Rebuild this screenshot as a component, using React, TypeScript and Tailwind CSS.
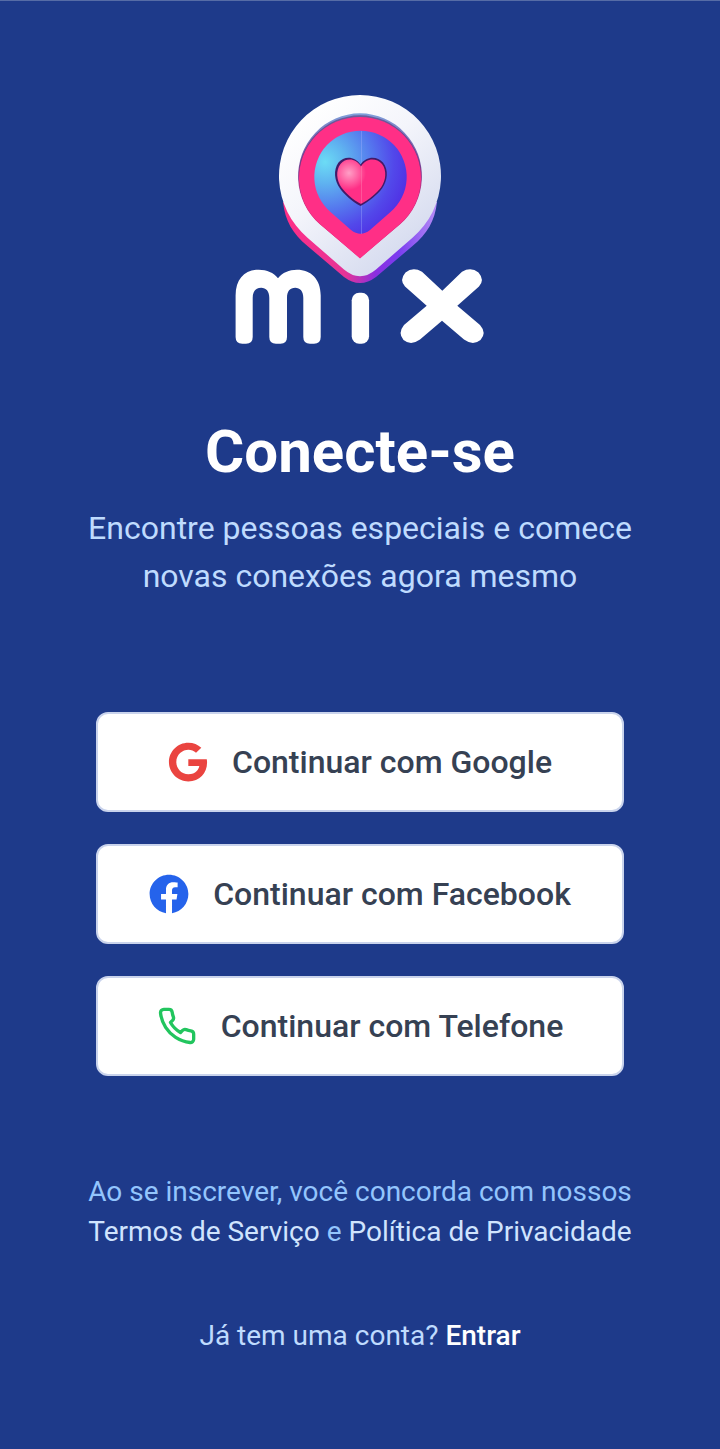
import type { ReactNode } from "react";
import { FaFacebook, FaGoogle } from "react-icons/fa";
import { FiPhone } from "react-icons/fi";

function MixLogo() {
  return (
    <svg viewBox="230 90 260 260" className="h-[260px] w-[260px]" role="img" aria-label="mix">
      <defs>
        <linearGradient id="rim" gradientUnits="userSpaceOnUse" x1="310" y1="110" x2="425" y2="250">
          <stop offset="0" stopColor="#ffffff" />
          <stop offset="0.4" stopColor="#f4f5fb" />
          <stop offset="1" stopColor="#d3d9ee" />
        </linearGradient>
        <linearGradient id="base" gradientUnits="userSpaceOnUse" x1="284" y1="0" x2="437" y2="0">
          <stop offset="0" stopColor="#ff2f86" />
          <stop offset="0.4" stopColor="#e53497" />
          <stop offset="0.6" stopColor="#8a2fe0" />
          <stop offset="0.75" stopColor="#7a3df0" />
          <stop offset="1" stopColor="#b58cf5" />
        </linearGradient>
        <radialGradient id="core" gradientUnits="userSpaceOnUse" cx="325" cy="162" r="86">
          <stop offset="0" stopColor="#6cdcf5" />
          <stop offset="0.25" stopColor="#5fb2f0" />
          <stop offset="0.55" stopColor="#5578ee" />
          <stop offset="0.8" stopColor="#5248ea" />
          <stop offset="1" stopColor="#5030e4" />
        </radialGradient>
        <radialGradient id="shine" gradientUnits="userSpaceOnUse" cx="349" cy="173" r="17">
          <stop offset="0" stopColor="#ff9fc6" />
          <stop offset="1" stopColor="#ff2f86" />
        </radialGradient>
        <linearGradient id="edge" gradientUnits="userSpaceOnUse" x1="0" y1="112" x2="0" y2="215">
          <stop offset="0" stopColor="#7fa2dc" />
          <stop offset="0.5" stopColor="#7a4a9c" />
          <stop offset="1" stopColor="#f0428f" />
        </linearGradient>
      </defs>
      <path
        fill="url(#base)"
        d="M283 202C285 221 293 234 307.500 246L344 277Q360 289 376 277L412.500 246C427 234 435 221 437 202Z"
      />
      <path
        fill="url(#rim)"
        d="M307.500 237.700A81 81 0 1 1 412.500 237.700L376 269.500Q360 283 344 269.500Z"
      />
      <path fill="url(#edge)" d="M319.500 224A61.900 63 0 1 1 400.500 224L360 258Z" />
      <path fill="#561f63" d="M320 224A61.300 61.800 0 1 1 400 224L360 258Z" fillOpacity="0.5" />
      <path fill="#ff2f86" d="M320 224A61 61 0 1 1 400 224L360 258.500Z" />
      <path
        fill="url(#core)"
        d="M330.500 212A46.200 46.200 0 1 1 390.500 212L370 230Q360.500 237.500 351 230Z"
      />
      <path stroke="#a8b4ff" strokeOpacity="0.35" strokeWidth="1" d="M361.500 131V234" />
      <path
        fill="#421a68"
        d="M360.500 164.500C355 156 344 155.500 338.500 162.500C333 170 334.500 181 340 188.500C344 194 352 201.500 360.500 206C369 201.500 378 194 382 188.500C387.500 181 389 170 383 162.500C377 155.500 366 156 360.500 164.500Z"
      />
      <path
        fill="url(#shine)"
        d="M361 166.500C356 158 346 157.500 340.500 164C335.500 170.500 336.500 180.500 341.500 187.500C345.500 193 353 200 361 204C368.500 200 377 193 381 187.500C386 180.500 387 170.500 382 164C376 157.500 366 158 361 166.500Z"
      />
      <path stroke="#ff79ad" strokeOpacity="0.5" strokeWidth="1" d="M361.500 166V203" />
      <g fill="#fff">
        <path d="M235.600 337V295.500C235.600 279 245 269.700 258.800 269.700C267 269.700 273.500 272.500 278 278.300C282.500 272.500 289 269.700 297 269.700C311 269.700 320.700 279 320.700 295.500V337Q320.700 343.700 314 343.700H310Q303.300 343.700 303.300 337V298C303.300 291 300 287.700 295.200 287.700C290 287.700 287 291 287 298V337Q287 343.700 280.500 343.700H276Q269.300 343.700 269.300 337V298C269.300 291 266 287.700 261.200 287.700C256 287.700 252.700 291 252.700 298V337Q252.700 343.700 246 343.700H242.300Q235.600 343.700 235.600 337Z" />
        <rect x="351.700" y="292.700" width="17.400" height="51" rx="7.500" />
        <path d="M442.300 290.700L422 271.800Q413 266.500 405.500 272.500Q399 280 405 286.500L426.700 305.700L404 325Q397.500 333 403.500 340Q411 346 420 339.500L442 320.700L464 339.500Q473 346 480.500 340Q487 333 480 325L457.300 305.700L479 286.500Q485 280 478.500 272.500Q471 266.500 462 271.800Z" />
      </g>
    </svg>
  );
}

function ProviderButton({ icon, children }: { icon: ReactNode; children: ReactNode }) {
  return (
    <button
      type="button"
      className="flex h-[100px] w-full items-center justify-center gap-6 rounded-xl border-2 border-[#c9d3ec] bg-white text-[32px] leading-[48px] font-medium text-gray-700"
    >
      {icon}
      <span>{children}</span>
    </button>
  );
}

export default function App() {
  return (
    <main className="flex min-h-screen flex-col items-center border-t border-[#566ca6] bg-[#1e3a8a] px-12 pt-[89px] pb-[93px] font-[Roboto,sans-serif]">
      <MixLogo />
      <h1 className="mt-[66px] text-center text-[60px] leading-[72px] font-bold text-white">Conecte-se</h1>
      <p className="mt-4 max-w-[600px] text-center text-[32px] leading-[48px] text-[#bfdbfe]">
        Encontre pessoas especiais e comece novas conexões agora mesmo
      </p>
      <div className="mt-[112px] flex w-full flex-col gap-8 px-12">
        <ProviderButton icon={<FaGoogle className="size-10 text-[#ea4440]" />}>Continuar com Google</ProviderButton>
        <ProviderButton icon={<FaFacebook className="size-10 text-[#2563eb]" />}>Continuar com Facebook</ProviderButton>
        <ProviderButton icon={<FiPhone className="size-10 text-[#22c55e]" />}>Continuar com Telefone</ProviderButton>
      </div>
      <p className="mt-24 max-w-[600px] text-center text-[28px] leading-10 text-[#93c5fd]">
        Ao se inscrever, você concorda com nossos{" "}
        <a href="#termos" className="text-[#d0e4fe]">Termos de Serviço</a> e{" "}
        <a href="#privacidade" className="text-[#d0e4fe]">Política de Privacidade</a>
      </p>
      <p className="mt-16 text-center text-[28px] leading-10 text-[#bfdbfe]">
        Já tem uma conta?{" "}
        <a href="#entrar" className="font-medium text-white">Entrar</a>
      </p>
    </main>
  );
}
